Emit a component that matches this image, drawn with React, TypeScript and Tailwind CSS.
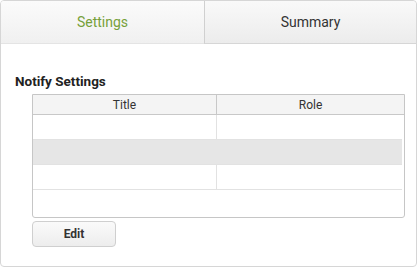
const rows = [0, 1, 2]

export default function App() {
  return (
    <div className="w-[417px] h-[267px] bg-white" style={{ fontFamily: 'Roboto, "Liberation Sans", sans-serif' }}>
      <div className="w-[417px] h-[267px] border border-[#d6d6d6] rounded-[4px] flex flex-col overflow-hidden">
        {/* Tabs */}
        <div className="flex h-[43px] flex-shrink-0">
          <div className="w-[203px] flex items-center justify-center bg-gradient-to-b from-[#fbfbfb] to-[#f0f0f0] border-b border-[#e4e4e4] text-[14px] text-[#76a03a]">
            Settings
          </div>
          <div className="flex-1 flex items-center justify-center bg-gradient-to-b from-[#f9f9f9] to-[#ececec] border-l border-[#d0d0d0] border-b border-b-[#d6d6d6] rounded-tr-[4px] text-[14px] text-[#333]">
            Summary
          </div>
        </div>

        {/* Content */}
        <div className="pl-[14px] pt-[29px]">
          <h2 className="text-[13.5px] font-bold leading-[16px] text-[#222]">Notify Settings</h2>
          <div className="ml-[17px] mt-[5px] w-[373px] h-[124px] border border-[#c6c6c6] rounded-b-[3px] flex flex-col">
            <div className="flex h-[20px] bg-[#f4f4f4] border-b border-[#c8c8c8] text-[12px] text-[#333]">
              <div className="w-[184px] flex items-center justify-center border-r border-[#c8c8c8]">Title</div>
              <div className="flex-1 flex items-center justify-center">Role</div>
            </div>
            {rows.map((i) => (
              <div
                key={i}
                className={`flex h-[25px] border-b border-[#e2e2e2] mr-[2px] ${i === 1 ? 'bg-[#e6e6e6]' : ''}`}
              >
                <div className={`w-[184px] ${i === 1 ? '' : 'border-r border-[#e2e2e2]'}`} />
                <div className="flex-1" />
              </div>
            ))}
          </div>
          <button className="ml-[17px] mt-[3px] w-[84px] h-[26px] border border-[#cfcfcf] rounded-[4px] bg-gradient-to-b from-[#fafafa] to-[#ededed] text-[12px] font-bold text-[#333]">
            Edit
          </button>
        </div>
      </div>
    </div>
  )
}
